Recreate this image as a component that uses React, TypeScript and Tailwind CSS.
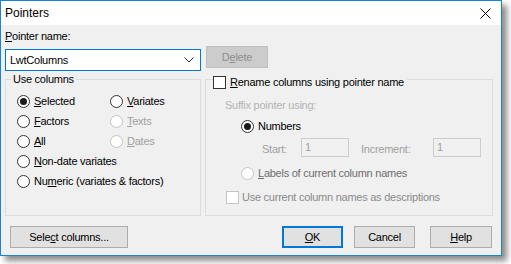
const font = "font-['Liberation_Sans',Arial,sans-serif]";

const Radio = ({
  checked = false,
  disabled = false,
}: {
  checked?: boolean;
  disabled?: boolean;
}) => (
  <span
    className={`flex h-[13px] w-[13px] shrink-0 items-center justify-center rounded-full border bg-white ${
      disabled ? "border-[#c4c4c4]" : "border-[#333333]"
    }`}
  >
    {checked && (
      <span
        className={`h-[7px] w-[7px] rounded-full ${
          disabled ? "bg-[#bcbcbc]" : "bg-[#1a1a1a]"
        }`}
      />
    )}
  </span>
);

const Check = ({ disabled = false }: { disabled?: boolean }) => (
  <span
    className={`block h-[13px] w-[13px] shrink-0 border bg-white ${
      disabled ? "border-[#c4c4c4]" : "border-[#333333]"
    }`}
  />
);

const RadioItem = ({
  label,
  u,
  rest,
  checked,
  disabled,
}: {
  label?: string;
  u: string;
  rest: string;
  checked?: boolean;
  disabled?: boolean;
}) => (
  <div className="flex h-[20px] items-center gap-[4px]">
    <Radio checked={checked} disabled={disabled} />
    <span className={disabled ? "text-[#a0a0a0]" : "text-black"}>
      {label}
      <u className="underline-offset-[1px]">{u}</u>
      {rest}
    </span>
  </div>
);

const Button = ({
  children,
  width,
  primary = false,
}: {
  children: React.ReactNode;
  width: string;
  primary?: boolean;
}) => (
  <button
    className={`flex h-[22px] ${width} items-center justify-center bg-[#e1e1e1] text-black ${
      primary ? "border-2 border-[#0078d7]" : "border border-[#adadad]"
    }`}
  >
    {children}
  </button>
);

export default function App() {
  return (
    <div className={`h-[264px] w-[511px] bg-white ${font} text-[11px] leading-[13px] tracking-[-0.25px]`}>
      <div className="flex h-[256px] w-[502px] flex-col border border-[#1883d7] bg-[#f0f0f0] shadow-[5px_5px_6px_rgba(0,0,0,0.45)]">
        {/* title bar */}
        <div className="flex h-[24px] items-center justify-between bg-white pl-[4px] pr-[10px]">
          <span className="text-[12px] tracking-normal text-black">Pointers</span>
          <svg width="11" height="11" viewBox="0 0 11 11">
            <path d="M0.5 0.5 L10.5 10.5 M10.5 0.5 L0.5 10.5" stroke="#000" strokeWidth="1" />
          </svg>
        </div>

        <div className="flex flex-col px-[4px]">
          <div className="mt-[5px] h-[13px]">
            <u>P</u>ointer name:
          </div>

          <div className="mt-[3px] flex items-start gap-[5px]">
            <div className="mt-[3px] flex h-[22px] w-[196px] items-center justify-between border border-[#0078d7] bg-white pl-[4px] pr-[6px]">
              <span>LwtColumns</span>
              <svg width="10" height="6" viewBox="0 0 10 6">
                <path d="M0.5 0.5 L5 5 L9.5 0.5" stroke="#333" fill="none" />
              </svg>
            </div>
            <div className="flex h-[22px] w-[62px] items-center justify-center border border-[#bfbfbf] bg-[#cccccc] text-[#8f8f8f]">
              D<u>e</u>lete
            </div>
          </div>

          <div className="mt-[8px] flex gap-[4px]">
            {/* Use columns */}
            <div className="relative h-[137px] w-[196px] border border-[#dcdcdc]">
              <span className="absolute -top-[7px] left-[5px] bg-[#f0f0f0] px-[2px]">
                Use columns
              </span>
              <div className="grid grid-cols-[93px_1fr] pl-[11px] pt-[11px]">
                <RadioItem u="S" rest="elected" checked />
                <RadioItem u="V" rest="ariates" />
                <RadioItem u="F" rest="actors" />
                <RadioItem u="T" rest="exts" disabled />
                <RadioItem u="A" rest="ll" />
                <RadioItem u="D" rest="ates" disabled />
                <div className="col-span-2">
                  <RadioItem u="N" rest="on-date variates" />
                </div>
                <div className="col-span-2">
                  <RadioItem label="Nu" u="m" rest="eric (variates & factors)" />
                </div>
              </div>
            </div>

            {/* Rename */}
            <div className="relative h-[137px] w-[288px] border border-[#dcdcdc]">
              <div className="absolute -top-[4px] left-[7px] flex items-center gap-[4px] bg-[#f0f0f0] pr-[3px]">
                <Check />
                <span>
                  <u>R</u>ename columns using pointer name
                </span>
              </div>
              <div className="flex flex-col pl-[19px] pt-[19px] text-[#a0a0a0]">
                <div className="h-[13px] text-[#b4b4b4]">Suffix pointer using:</div>
                <div className="mt-[8px] ml-[16px] flex items-center gap-[4px] text-black">
                  <Radio checked />
                  <span>Numbers</span>
                </div>
                <div className="mt-[5px] flex h-[19px] items-center">
                  <span className="ml-[37px] w-[39px] pt-[4px]">Start:</span>
                  <span className="h-[19px] w-[48px] border border-[#cccccc] pl-[3px] pt-[2px]">1</span>
                  <span className="ml-[12px] w-[72px] pt-[4px]">Increment:</span>
                  <span className="h-[19px] w-[48px] border border-[#cccccc] pl-[3px] pt-[2px]">1</span>
                </div>
                <div className="mt-[10px] ml-[16px] flex items-center gap-[4px] text-[#6d6d6d]">
                  <Radio disabled />
                  <span>
                    <u>L</u>abels of current column names
                  </span>
                </div>
                <div className="mt-[11px] ml-[1px] flex items-center gap-[3px] text-[#8a8a8a]">
                  <Check disabled />
                  <span>Use current column names as descriptions</span>
                </div>
              </div>
            </div>
          </div>

          <div className="mt-[10px] flex items-center pl-[5px]">
            <Button width="w-[118px]">
              <span>
                Sele<u>c</u>t columns...
              </span>
            </Button>
            <div className="ml-[154px]">
              <Button width="w-[61px]" primary>
                <span>
                  <u>O</u>K
                </span>
              </Button>
            </div>
            <div className="ml-[11px]">
              <Button width="w-[61px]">Cancel</Button>
            </div>
            <div className="ml-[15px]">
              <Button width="w-[62px]">
                <span>
                  <u>H</u>elp
                </span>
              </Button>
            </div>
          </div>
        </div>
      </div>
    </div>
  );
}
